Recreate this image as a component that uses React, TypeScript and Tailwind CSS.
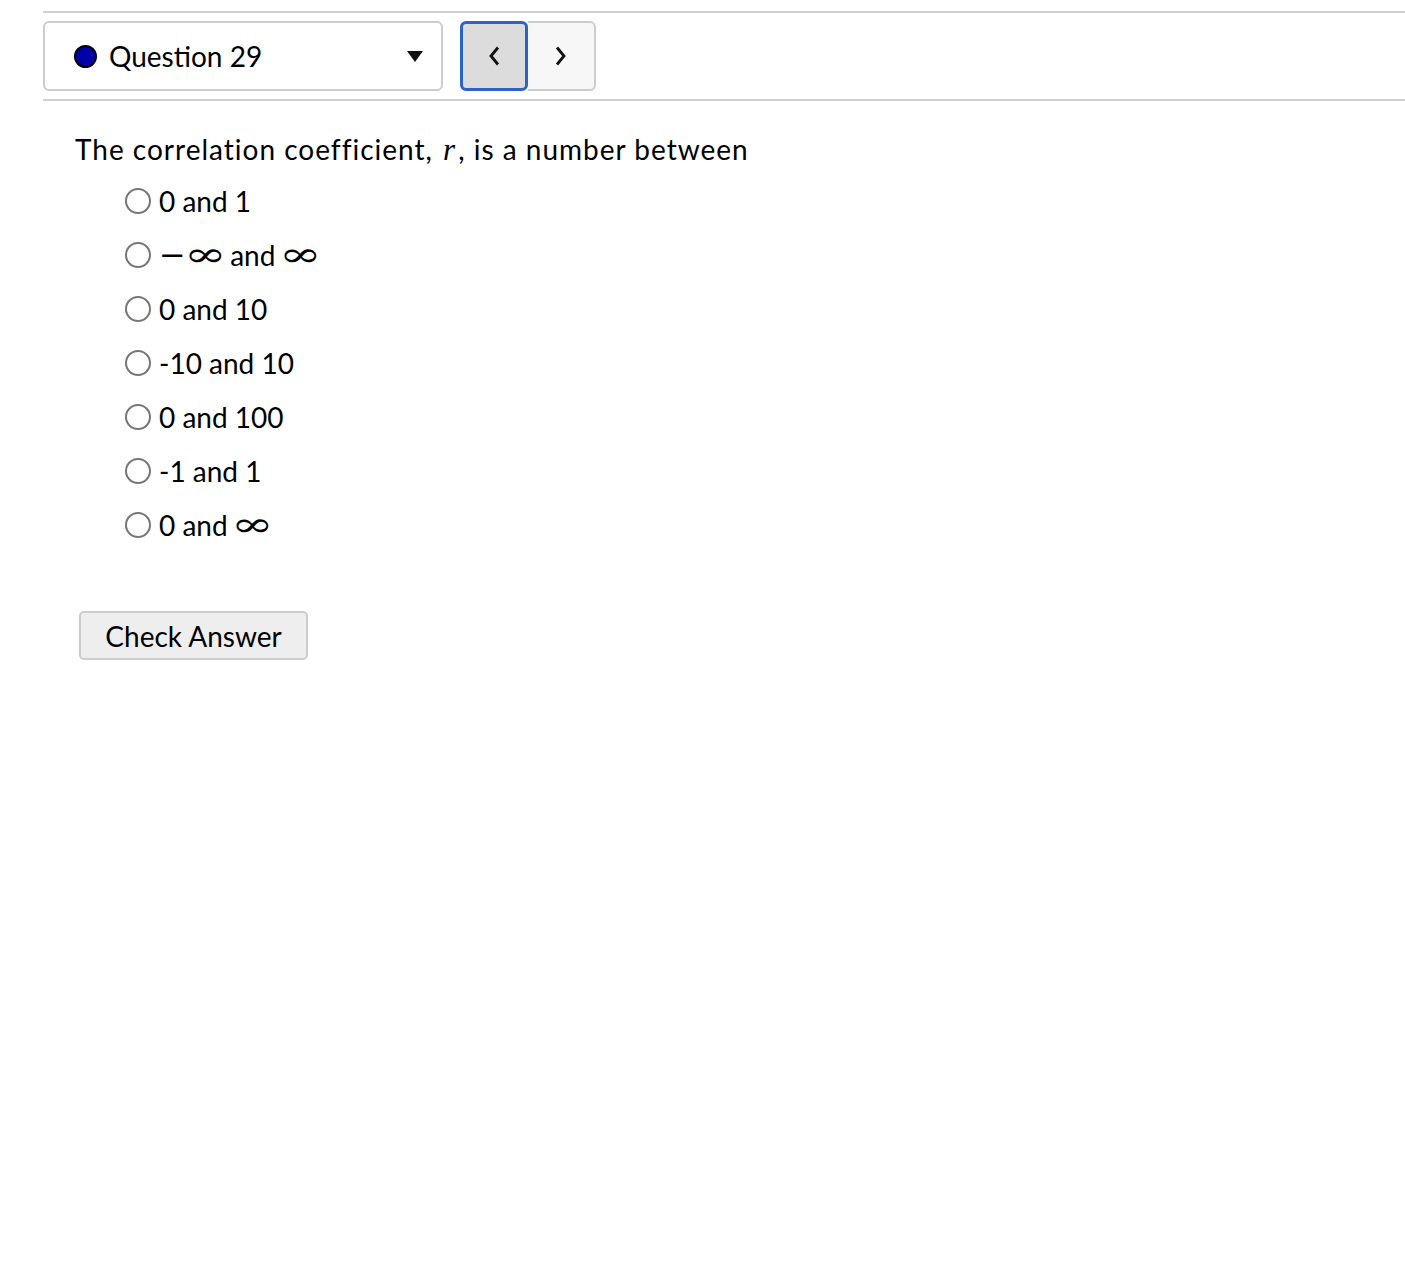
import { ReactNode } from "react";

// math-style infinity, wider and flatter than the text glyph
function Inf() {
  return (
    <span className="inline-block w-[35px] text-center">
      <span className="inline-block scale-x-[1.5] font-['DejaVu_Serif',serif] text-[34px] leading-none">∞</span>
    </span>
  );
}

const choices: ReactNode[] = [
  "0 and 1",
  <>
    <span className="inline-block w-[25px] text-center font-['DejaVu_Sans',sans-serif] text-[32px] leading-none">−</span>
    <span className="ml-[4px]">
      <Inf />
    </span>{" "}
    and <Inf />
  </>,
  "0 and 10",
  "-10 and 10",
  "0 and 100",
  "-1 and 1",
  <>
    0 and <Inf />
  </>,
];

export default function App() {
  return (
    <div className="min-h-[1281px] bg-white pl-[43px] pt-[11px] font-['Lato',sans-serif] text-[28px] text-black">
      {/* header bar */}
      <div className="flex items-center gap-[17px] border-y-2 border-[#d0d0d0] py-[8px]">
        <div className="flex h-[70px] w-[400px] items-center rounded-[6px] border-2 border-[#cccccc] pl-[29px] pr-[18px]">
          <span className="h-[23px] w-[23px] rounded-full border-2 border-black bg-[#0000a8]" />
          <span className="ml-[12px] flex-1">Question 29</span>
          <svg width="16" height="11" viewBox="0 0 16 11">
            <path d="M0 0 H16 L8 11 Z" fill="#111" />
          </svg>
        </div>
        <div className="flex">
          <button className="flex h-[70px] w-[68px] items-center justify-center rounded-[6px] border-[3px] border-[#2f62c9] bg-[#dcdcdc]">
            <svg width="16" height="24" viewBox="0 0 16 24">
              <path d="M12 3.5 L5 12 L12 20.5" stroke="#111" strokeWidth="2.8" fill="none" />
            </svg>
          </button>
          <button className="flex h-[70px] w-[68px] items-center justify-center rounded-r-[6px] border-2 border-l-0 border-[#cccccc] bg-[#f7f7f7]">
            <svg width="16" height="24" viewBox="0 0 16 24">
              <path d="M4 3.5 L11 12 L4 20.5" stroke="#111" strokeWidth="2.8" fill="none" />
            </svg>
          </button>
        </div>
      </div>

      {/* question */}
      <div className="pl-[32px] pt-[29px]">
        <p className="leading-[38px] tracking-[1px] [font-variant-ligatures:none]">
          The correlation coefficient,{" "}
          <span className="mx-[2px] font-['Liberation_Serif',serif] text-[31px] italic">r</span>, is a number between
        </p>
        <div className="mt-[12px] flex flex-col gap-[14px] pl-[50px]">
          {choices.map((c, i) => (
            <label key={i} className="flex h-[40px] items-center">
              <span className="h-[26px] w-[26px] shrink-0 rounded-full border-2 border-[#767676] bg-white" />
              <span className="ml-[8px]">{c}</span>
            </label>
          ))}
        </div>
        <button className="ml-[4px] mt-[66px] h-[49px] w-[229px] rounded-[5px] border-2 border-[#cccccc] bg-[#eeeeee] text-[28px]">
          Check Answer
        </button>
      </div>
    </div>
  );
}
